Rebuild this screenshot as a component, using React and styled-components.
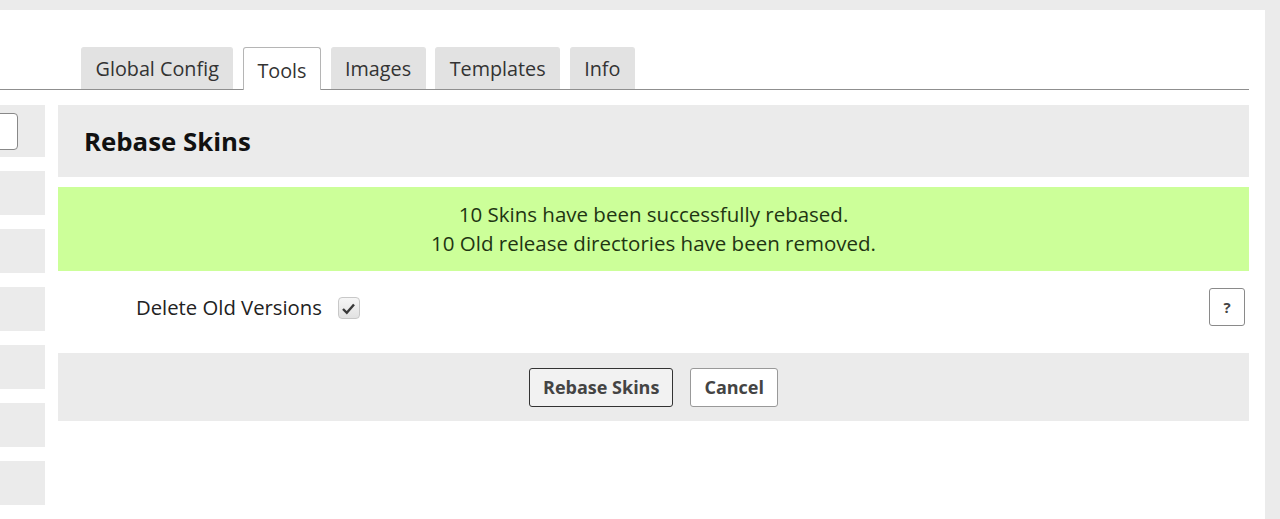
import styled, { createGlobalStyle } from 'styled-components';

const GlobalStyle = createGlobalStyle`
  html, body {
    margin: 0;
    padding: 0;
    background: #ebebeb;
    font-family: 'Open Sans', 'Noto Sans', sans-serif;
    color: #222;
  }
`;

// Conteneur principal
const Page = styled.div`
  padding-top: 10px;
  height: 509px;
  overflow: hidden;
`;

const Panel = styled.div`
  width: 1265px;
  height: 100%;
  background: #fff;
`;

// Onglets
const TabBar = styled.div`
  display: flex;
  gap: 9.5px;
  width: 1249px;
  box-sizing: border-box;
  padding: 37px 0 0 81px;
  border-bottom: 1px solid #8f8f8f;
`;

const Tab = styled.div`
  box-sizing: border-box;
  padding: 0 13.5px;
  display: flex;
  align-items: center;
  font-size: 19.8px;
  border-radius: 3px 3px 0 0;
  background: ${(props) => (props.active ? '#fff' : '#e2e2e2')};
  border: ${(props) => (props.active ? '1px solid #b5b5b5' : '1px solid #e2e2e2')};
  border-bottom: none;
  margin-bottom: ${(props) => (props.active ? '-1px' : '0')};
  height: ${(props) => (props.active ? '43px' : '42px')};
  padding-top: ${(props) => (props.active ? '3px' : '0')};
  color: #333;
`;

const Body = styled.div`
  display: grid;
  grid-template-columns: 45px 1191px;
  column-gap: 13px;
  margin-top: 15px;
`;

// Barre latérale
const Sidebar = styled.div`
  display: flex;
  flex-direction: column;
  gap: 14px;
`;

const SideItem = styled.div`
  height: ${(props) => (props.tall ? '52px' : '44px')};
  background: #ebebeb;
  display: flex;
  align-items: center;
  justify-content: flex-end;
  overflow: hidden;
  padding-right: 27px;
`;

const SideInput = styled.div`
  flex: 0 0 80px;
  height: 37px;
  box-sizing: border-box;
  border: 1px solid #888;
  border-radius: 4px;
  background: #fff;
`;

// Contenu
const Main = styled.div`
  display: flex;
  flex-direction: column;
`;

const Header = styled.div`
  height: 72px;
  background: #ebebeb;
  display: flex;
  align-items: center;
  padding-left: 26px;
  font-size: 25.8px;
  font-weight: 700;
  color: #111;
`;

const Success = styled.div`
  margin-top: 10px;
  height: 84px;
  box-sizing: border-box;
  padding-top: 13px;
  background: #ccff99;
  color: #1f3512;
  text-align: center;
  font-size: 20.5px;
  line-height: 29px;
`;

const Row = styled.div`
  height: 82px;
  box-sizing: border-box;
  display: flex;
  align-items: center;
  padding: 0 4px 10px 78px;
`;

const Label = styled.span`
  font-size: 20.3px;
  color: #222;
`;

const Check = styled.span`
  width: 22px;
  height: 22px;
  margin-left: 16px;
  margin-top: 2px;
  box-sizing: border-box;
  border: 1px solid #c8c8c8;
  border-radius: 4px;
  background: linear-gradient(#f6f6f6, #e2e2e2);
  display: flex;
  align-items: center;
  justify-content: center;
`;

const Help = styled.button`
  margin-left: auto;
  width: 36px;
  height: 38px;
  border: 1px solid #8a8a8a;
  border-radius: 3px;
  background: #fff;
  font-family: inherit;
  font-weight: 700;
  font-size: 15px;
  color: #444;
  padding: 0;
`;

const Footer = styled.div`
  height: 68px;
  background: #ebebeb;
  display: flex;
  align-items: center;
  justify-content: center;
  gap: 17px;
`;

const Button = styled.button`
  height: 39px;
  padding: 0 13px;
  border: 1px solid ${(props) => (props.primary ? '#333' : '#999')};
  border-radius: 3px;
  background: ${(props) => (props.primary ? '#f2f2f2' : '#fff')};
  font-family: inherit;
  font-weight: 700;
  font-size: 18px;
  color: #444;
`;

const tabs = ['Global Config', 'Tools', 'Images', 'Templates', 'Info'];

const App = () => (
  <>
    <GlobalStyle />
    <Page>
      <Panel>
        <TabBar>
          {tabs.map((t) => (
            <Tab key={t} active={t === 'Tools'}>
              {t}
            </Tab>
          ))}
        </TabBar>
        <Body>
          <Sidebar>
            <SideItem tall>
              <SideInput />
            </SideItem>
            {[1, 2, 3, 4, 5, 6].map((i) => (
              <SideItem key={i} />
            ))}
          </Sidebar>
          <Main>
            <Header>Rebase Skins</Header>
            <Success>
              10 Skins have been successfully rebased.
              <br />
              10 Old release directories have been removed.
            </Success>
            <Row>
              <Label>Delete Old Versions</Label>
              <Check>
                <svg width="15" height="13" viewBox="0 0 15 13">
                  <path d="M2 7 L5.8 10.8 L13 2.5" fill="none" stroke="#3a3a3a" strokeWidth="2.4" />
                </svg>
              </Check>
              <Help>?</Help>
            </Row>
            <Footer>
              <Button primary>Rebase Skins</Button>
              <Button>Cancel</Button>
            </Footer>
          </Main>
        </Body>
      </Panel>
    </Page>
  </>
);

export default App;
